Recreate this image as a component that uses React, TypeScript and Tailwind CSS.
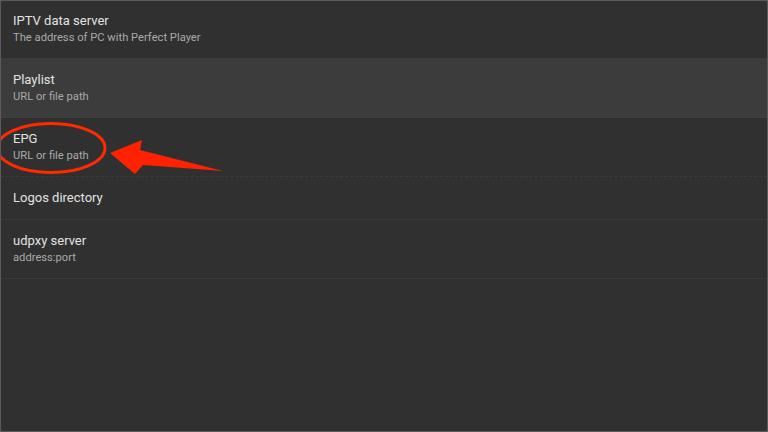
import React from "react";

type Item = { title: string; sub?: string; h: string; selected?: boolean; border: string };

const items: Item[] = [
  { title: "IPTV data server", sub: "The address of PC with Perfect Player", h: "h-[57px]", border: "border-b border-transparent" },
  { title: "Playlist", sub: "URL or file path", h: "h-[60px]", selected: true, border: "border-b border-dotted border-[#444444]" },
  { title: "EPG", sub: "URL or file path", h: "h-[59px]", border: "border-b border-dashed border-[#3b3b3b]" },
  { title: "Logos directory", h: "h-[43px]", border: "border-b border-[#3a3a3a]" },
  { title: "udpxy server", sub: "address:port", h: "h-[59px]", border: "border-b border-[#3a3a3a]" },
];

export default function App() {
  return (
    <div
      className="relative w-[768px] h-[432px] overflow-hidden bg-[#303030] border border-[#5a5a5a]"
      style={{ fontFamily: "Roboto, 'Noto Sans', sans-serif" }}
    >
      <div className="flex flex-col">
        {items.map((it) => (
          <div
            key={it.title}
            className={`${it.h} ${it.border} ${it.selected ? "bg-[#3c3c3c]" : ""} flex flex-col justify-center pl-3`}
          >
            <div className="text-[13px] leading-[18px] text-[#e2e2e2]">{it.title}</div>
            {it.sub && <div className="text-[11.2px] leading-[16px] text-[#a9a9a9]">{it.sub}</div>}
          </div>
        ))}
      </div>
      <svg className="absolute left-[-1px] top-[-1px]" width="768" height="432" viewBox="0 0 768 432">
        <ellipse cx="51" cy="148" rx="54" ry="24.5" fill="none" stroke="#ff2a00" strokeWidth="3" />
        <polygon points="110,153 142,140 140,150 223,171 143,165 135,174" fill="#ff2200" />
      </svg>
    </div>
  );
}
